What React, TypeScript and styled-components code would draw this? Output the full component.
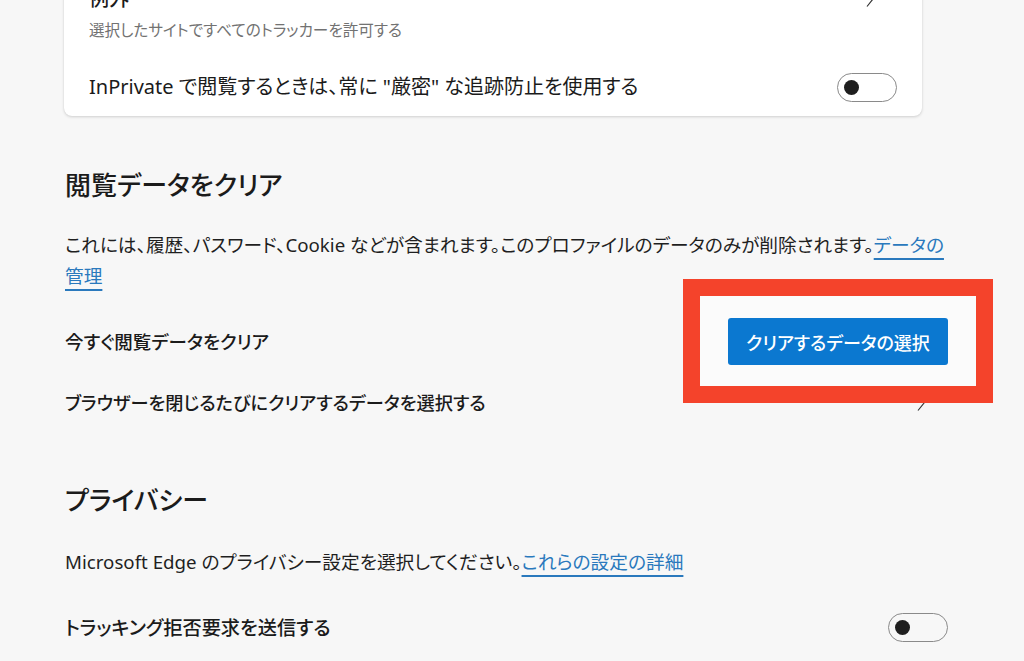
import React from "react";
import styled, { createGlobalStyle } from "styled-components";

const Global = createGlobalStyle`
  html, body {
    margin: 0;
    padding: 0;
    background: #f7f7f7;
    overflow: hidden;
  }
  body {
    font-family: "Noto Sans", "Noto Sans CJK JP", sans-serif;
    color: #1b1b1b;
    font-feature-settings: "palt";
  }
`;

const Page = styled.main`
  width: 883px;
  padding-left: 65px;
  display: flex;
  flex-direction: column;
`;

const Card = styled.section`
  width: 858px;
  margin: -27px 0 0 -1px;
  background: #ffffff;
  border-radius: 8px;
  box-shadow: 0 1px 3px rgba(0, 0, 0, 0.16), 0 0 1px rgba(0, 0, 0, 0.08);
  display: flex;
  flex-direction: column;
  padding: 0 25px;
  box-sizing: border-box;
`;

const CardRow = styled.div`
  display: flex;
  align-items: center;
  justify-content: space-between;
  min-height: 58px;
`;

const TextStack = styled.div`
  display: flex;
  flex-direction: column;
  gap: 6px;
  padding: 12px 0 17px;
`;

const CardTitle = styled.div`
  font-size: 20px;
  line-height: 28px;
  font-weight: 500;
`;

const SubText = styled.div`
  font-size: 15.6px;
  line-height: 22px;
  color: #727272;
`;

const RowLabel = styled.div<{ $size: number; $weight?: number }>`
  font-size: ${(p) => p.$size}px;
  font-weight: ${(p) => p.$weight ?? 400};
  line-height: 28px;
`;

const Chevron = styled.svg<{ $shift?: number }>`
  width: 8px;
  height: 16px;
  margin-right: 23px;
  align-self: ${(p) => (p.$shift ? "flex-start" : "center")};
  margin-top: ${(p) => p.$shift ?? 0}px;
  flex: none;
`;

const Toggle = styled.div`
  width: 60px;
  height: 29px;
  box-sizing: border-box;
  border: 1.5px solid #8a8a8a;
  border-radius: 15px;
  display: flex;
  align-items: center;
  padding-left: 6px;
  flex: none;
`;

const Knob = styled.span`
  width: 15px;
  height: 15px;
  border-radius: 50%;
  background: #1f1f1f;
`;

const Heading = styled.h2<{ $mt: number }>`
  margin: ${(p) => p.$mt}px 0 0;
  font-size: 26px;
  line-height: 40px;
  font-weight: 500;
`;

const Paragraph = styled.p<{ $mt: number }>`
  margin: ${(p) => p.$mt}px 0 0;
  width: 888px;
  font-size: 18.7px;
  line-height: 31px;
  font-weight: 400;
  color: #1f1f1f;
`;

const Link = styled.a`
  color: #2a79bd;
  text-decoration: underline;
  text-decoration-thickness: 1.5px;
  text-underline-offset: 6px;
  cursor: pointer;
`;

const SettingRow = styled.div<{ $mt: number }>`
  margin-top: ${(p) => p.$mt}px;
  min-height: 47px;
  display: flex;
  align-items: center;
  justify-content: space-between;
`;

const ButtonWrap = styled.div`
  position: relative;
  display: flex;
`;

const PrimaryButton = styled.button`
  position: relative;
  z-index: 2;
  width: 220px;
  height: 47px;
  border: none;
  border-radius: 3px;
  background: #0b78d0;
  color: #ffffff;
  font-family: "Noto Sans", "Noto Sans CJK JP", sans-serif;
  font-feature-settings: "palt";
  font-size: 18px;
  font-weight: 500;
  cursor: pointer;
`;

const Highlight = styled.span`
  position: absolute;
  z-index: 1;
  top: -39px;
  bottom: -38px;
  left: -45px;
  right: -45px;
  border: 17px solid #f4432b;
  background: #fbfbfb;
  pointer-events: none;
`;

const ChevronIcon = ({ shift }: { shift?: number }) => (
  <Chevron $shift={shift} viewBox="0 0 8 16" fill="none">
    <path d="M1 0.5 L7 8 L1 15.5" stroke="#333" strokeWidth="1.2" />
  </Chevron>
);

export default function App() {
  return (
    <>
      <Global />
      <Page>
        <Card>
          <CardRow>
            <TextStack>
              <CardTitle>例外</CardTitle>
              <SubText>選択したサイトですべてのトラッカーを許可する</SubText>
            </TextStack>
            <ChevronIcon shift={18} />
          </CardRow>
          <CardRow>
            <RowLabel $size={20}>InPrivate で閲覧するときは、常に "厳密" な追跡防止を使用する</RowLabel>
            <Toggle>
              <Knob />
            </Toggle>
          </CardRow>
        </Card>

        <Heading $mt={49}>閲覧データをクリア</Heading>
        <Paragraph $mt={24}>
          これには、履歴、パスワード、Cookie などが含まれます。このプロファイルのデータのみが削除されます。
          <Link>データの管理</Link>
        </Paragraph>
        <SettingRow $mt={27}>
          <RowLabel $size={18.5} $weight={500}>今すぐ閲覧データをクリア</RowLabel>
          <ButtonWrap>
            <Highlight />
            <PrimaryButton>クリアするデータの選択</PrimaryButton>
          </ButtonWrap>
        </SettingRow>
        <SettingRow $mt={14}>
          <RowLabel $size={18.2} $weight={500}>ブラウザーを閉じるたびにクリアするデータを選択する</RowLabel>
          <ChevronIcon />
        </SettingRow>

        <Heading $mt={54}>プライバシー</Heading>
        <Paragraph $mt={26}>
          Microsoft Edge のプライバシー設定を選択してください。<Link>これらの設定の詳細</Link>
        </Paragraph>
        <SettingRow $mt={27}>
          <RowLabel $size={19.2} $weight={500}>トラッキング拒否要求を送信する</RowLabel>
          <Toggle>
            <Knob />
          </Toggle>
        </SettingRow>
      </Page>
    </>
  );
}
